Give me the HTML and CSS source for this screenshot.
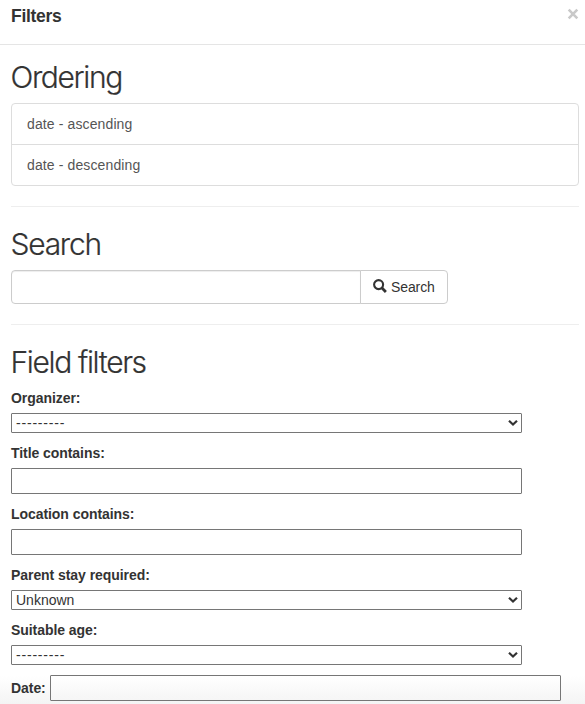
FILE: index.html
```html
<!DOCTYPE html>
<html lang="en">
<head>
<meta charset="utf-8">
<title>Filters</title>
<link rel="stylesheet" href="styles.css">
</head>
<body>
<header class="modal-header">
  <h4 class="modal-title">Filters</h4>
  <button class="close" aria-label="Close"><svg width="12" height="12" viewBox="0 0 12 12"><path d="M1.7 1.7l8.6 8.6M10.3 1.7l-8.6 8.6"/></svg></button>
</header>
<main class="modal-body">
  <h2 class="h-ordering">Ordering</h2>
  <div class="list-group">
    <a class="list-item">date - ascending</a>
    <a class="list-item">date - descending</a>
  </div>
  <hr>
  <h2 class="h-search">Search</h2>
  <div class="search-group">
    <input class="search-input" type="text">
    <button class="search-btn"><svg width="14" height="14" viewBox="0 0 14 14"><circle cx="5.6" cy="5.6" r="4.5"/><path d="M9 9l3.9 3.9"/></svg><span>Search</span></button>
  </div>
  <hr>
  <h2 class="h-fields">Field filters</h2>
  <form class="fields">
    <div class="field"><label>Organizer:</label><div class="select"><span class="dashes">---------</span><svg width="10" height="8" viewBox="0 0 10 8"><path d="M1 1.8l4 3.7 4-3.7"/></svg></div></div>
    <div class="field"><label>Title contains:</label><input class="text" type="text"></div>
    <div class="field"><label>Location contains:</label><input class="text" type="text"></div>
    <div class="field"><label>Parent stay required:</label><div class="select"><span>Unknown</span><svg width="10" height="8" viewBox="0 0 10 8"><path d="M1 1.8l4 3.7 4-3.7"/></svg></div></div>
    <div class="field"><label>Suitable age:</label><div class="select"><span class="dashes">---------</span><svg width="10" height="8" viewBox="0 0 10 8"><path d="M1 1.8l4 3.7 4-3.7"/></svg></div></div>
    <div class="field inline"><label>Date:</label><input class="text" type="text"></div>
  </form>
</main>
</body>
</html>
```
FILE: styles.css
```css
* { box-sizing: border-box; }
html { height: 704px; overflow: hidden; }
body {
  margin: 0;
  height: 704px;
  overflow: hidden;
  font: 14px/20px "Liberation Sans", Arial, sans-serif;
  color: #333;
  background: linear-gradient(#fff 676px, #f4f4f4 704px);
}
.modal-header {
  display: flex;
  justify-content: space-between;
  align-items: flex-start;
  height: 45px;
  padding: 4px 6px 0 11px;
  border-bottom: 1px solid #e5e5e5;
}
.modal-title { margin: 0; font-size: 17.5px; line-height: 25px; font-weight: 700; letter-spacing: -0.3px; }
.close { display: flex; padding: 0; margin-top: 4px; border: 0; background: none; }
.close svg { stroke: #c9c9c9; stroke-width: 2.6; fill: none; }
.modal-body { padding: 15px 6px 0 11px; }
h2 { margin: 0; padding-top: 1px; height: 43px; font: 300 30px/33px Inter, "Liberation Sans", sans-serif; white-space: nowrap; text-indent: -0.5px; -webkit-text-stroke: 0.2px #333; }
.h-ordering { letter-spacing: -1.35px; }
.h-search { letter-spacing: -1.25px; }
.h-fields { letter-spacing: -1.35px; }
hr { margin: 20px 0; border: 0; border-top: 1px solid #eee; }
.list-group { border: 1px solid #ddd; border-radius: 4px; }
.list-item { display: block; height: 40px; padding: 10px 15px; color: #555; letter-spacing: 0.12px; }
.list-item + .list-item { height: 41px; border-top: 1px solid #ddd; }
.search-group { display: flex; height: 34px; }
.search-input {
  width: 350px;
  border: 1px solid #ccc;
  border-radius: 4px 0 0 4px;
  box-shadow: inset 0 1px 1px rgba(0, 0, 0, .075);
}
.search-btn {
  display: flex;
  align-items: center;
  gap: 4px;
  width: 88px;
  margin-left: -1px;
  padding: 0 12px;
  border: 1px solid #ccc;
  border-radius: 0 4px 4px 0;
  background: #fff;
  color: #333;
  font: inherit;
  letter-spacing: -0.1px;
}
.search-btn svg { flex: none; margin-top: -2px; stroke: #333; stroke-width: 2.1; fill: none; }
.search-btn path { stroke-width: 2.8; }
.fields { display: flex; flex-direction: column; gap: 10px; }
.field { display: flex; flex-direction: column; gap: 5px; }
label { font-weight: 700; letter-spacing: -0.06px; }
.select {
  display: flex;
  align-items: center;
  justify-content: space-between;
  width: 511px;
  height: 20px;
  padding: 0 3px 0 4px;
  border: 1px solid #767676;
  border-radius: 1px;
  background: #fff;
}
.select svg { fill: none; stroke: #333; stroke-width: 2.2; }
.dashes { letter-spacing: 0.8px; }
.text {
  width: 511px;
  height: 26px;
  padding: 1px 2px;
  border: 1px solid #767676;
  border-radius: 1px;
  background: transparent;
}
.inline { flex-direction: row; align-items: center; gap: 4px; }
.inline label { width: 35px; }
```
